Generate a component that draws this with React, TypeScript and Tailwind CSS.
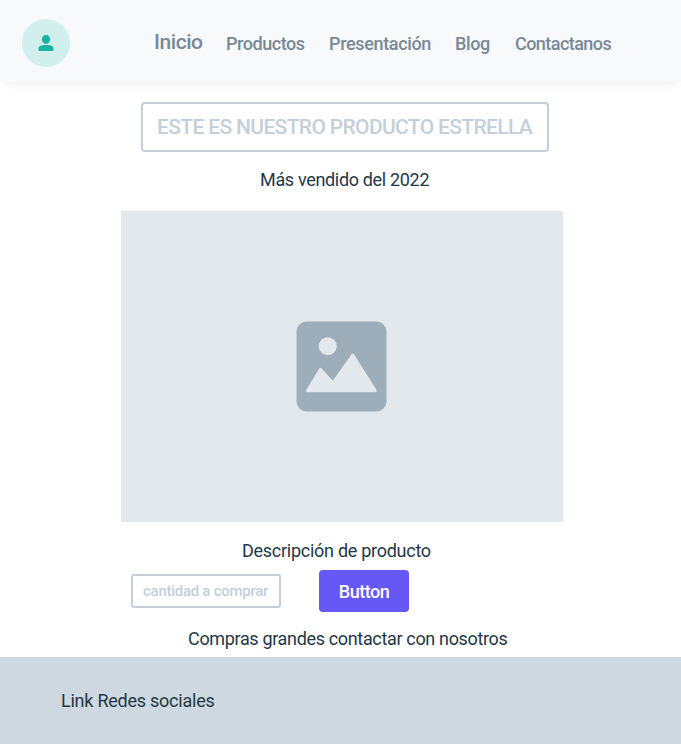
const links = [
  { label: 'Productos', style: 'w-[80px] tracking-[-0.45px]' },
  { label: 'Presentación', style: 'w-[103px] tracking-[-0.35px]' },
  { label: 'Blog', style: 'w-[37px] tracking-[-0.4px]' },
  { label: 'Contactanos', style: 'w-[98px] tracking-[-0.55px]' },
];

function Avatar() {
  return (
    <div className="flex h-12 w-12 items-center justify-center rounded-full bg-[#d1efec]">
      <svg width="16" height="16" viewBox="0 0 16 16" fill="#1ab3a1">
        <ellipse cx="8" cy="4.4" rx="4.1" ry="4.4" />
        <path d="M0.6 16V13.2C0.6 11 3.2 10.1 8 10.1S15.4 11 15.4 13.2V16Z" />
      </svg>
    </div>
  );
}

function PictureIcon() {
  return (
    <svg width="92" height="92" viewBox="0 0 92 92">
      <rect x="0.5" y="0.5" width="90" height="90" rx="10" fill="#9dadba" />
      <circle cx="31.7" cy="25.2" r="9" fill="#e2e8ec" />
      <path
        d="M11.5 69.8 24.5 48.4 37 62 56.7 34 79.3 69.8Z"
        fill="#e2e8ec"
        stroke="#e2e8ec"
        strokeWidth="3"
        strokeLinejoin="round"
      />
    </svg>
  );
}

export default function App() {
  return (
    <div className="flex h-[744px] w-[681px] flex-col overflow-hidden bg-white font-['Roboto',sans-serif] text-lg leading-6 whitespace-nowrap text-[#243746]">
      <header className="flex h-[82px] shrink-0 items-center bg-[#f8f9fb] pt-1 pl-[22px] font-medium text-[#788896] shadow-[0_6px_10px_-4px_rgba(0,0,0,0.07)]">
        <Avatar />
        <nav className="flex items-end gap-[23px] pl-[84px]">
          <a className="w-[49px] pb-0.5 text-[21px] tracking-[-0.45px]">Inicio</a>
          {links.map((link) => (
            <a key={link.label} className={link.style}>
              {link.label}
            </a>
          ))}
        </nav>
      </header>

      <main className="flex h-[575px] shrink-0 flex-col items-start pt-5">
        <h1 className="ml-[141px] flex h-[50px] w-[408px] items-center rounded border-2 border-[#c3cfd9] pl-[14px] text-[21px] font-medium tracking-[-0.65px] text-[#c3cfd9]">
          ESTE ES NUESTRO PRODUCTO ESTRELLA
        </h1>
        <p className="mt-4 ml-[260px] tracking-[-0.33px]">Más vendido del 2022</p>
        <div className="mt-[19px] ml-[121px] flex h-[311px] w-[442px] items-center justify-center bg-[#e2e8ec]">
          <PictureIcon />
        </div>
        <p className="mt-[17px] ml-[242px] tracking-[-0.27px]">Descripción de producto</p>
        <div className="mt-[7px] ml-[131px] flex items-center gap-[38px]">
          <div className="flex h-[34px] w-[150px] items-center rounded-[3px] border-2 border-[#c3cfd9] pl-[10px] text-[15px] font-medium tracking-[-0.27px] text-[#c3cfd9]">
            cantidad a comprar
          </div>
          <button className="h-[42px] w-[90px] rounded bg-[#6558f5] pt-0.5 font-medium tracking-[-0.5px] text-white">Button</button>
        </div>
        <p className="mt-[15px] ml-[188px] tracking-[-0.34px]">Compras grandes contactar con nosotros</p>
      </main>

      <footer className="flex h-[87px] shrink-0 items-center bg-[#cdd8e0] pl-[61px]">
        <p className="tracking-[-0.24px]">Link Redes sociales</p>
      </footer>
    </div>
  );
}
